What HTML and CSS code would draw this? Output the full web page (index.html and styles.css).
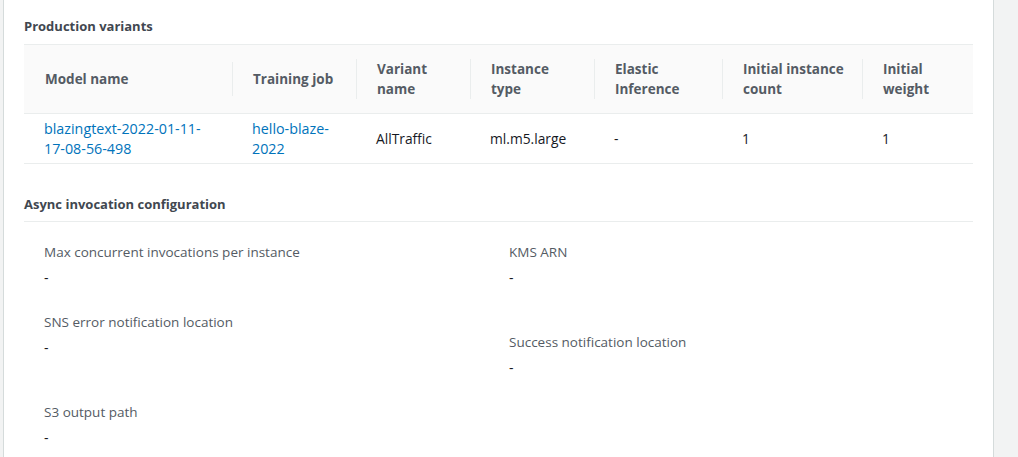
FILE: index.html
```html
<!DOCTYPE html>
<html>
<head>
<meta charset="utf-8">
<link rel="stylesheet" href="styles.css">
</head>
<body>
<div class="page">
  <div class="card">
    <h2 class="section-title">Production variants</h2>
    <table class="variants">
      <colgroup>
        <col style="width:208px"><col style="width:124px"><col style="width:114px"><col style="width:124px"><col style="width:128px"><col style="width:140px"><col style="width:111px">
      </colgroup>
      <thead>
        <tr>
          <th><span class="th-in">Model name</span></th>
          <th><span class="th-in div">Training job</span></th>
          <th><span class="th-in div">Variant<br>name</span></th>
          <th><span class="th-in div">Instance<br>type</span></th>
          <th><span class="th-in div">Elastic<br>Inference</span></th>
          <th><span class="th-in div">Initial instance<br>count</span></th>
          <th><span class="th-in div">Initial<br>weight</span></th>
        </tr>
      </thead>
      <tbody>
        <tr>
          <td><a href="#">blazingtext-2022-01-11-<br>17-08-56-498</a></td>
          <td><a href="#">hello-blaze-<br>2022</a></td>
          <td>AllTraffic</td>
          <td>ml.m5.large</td>
          <td>-</td>
          <td>1</td>
          <td>1</td>
        </tr>
      </tbody>
    </table>
    <h2 class="section-title async">Async invocation configuration</h2>
    <div class="fields">
      <div class="col">
        <div class="field"><div class="label">Max concurrent invocations per instance</div><div class="value">-</div></div>
        <div class="field"><div class="label">SNS error notification location</div><div class="value">-</div></div>
        <div class="field gap"><div class="label">S3 output path</div><div class="value">-</div></div>
      </div>
      <div class="col right">
        <div class="field"><div class="label">KMS ARN</div><div class="value">-</div></div>
        <div class="field gap"><div class="label">Success notification location</div><div class="value">-</div></div>
      </div>
    </div>
  </div>
  <div class="side"></div>
</div>
</body>
</html>
```
FILE: styles.css
```css
html, body { margin: 0; padding: 0; }
body {
  font-family: "Open Sans", "Noto Sans", sans-serif;
  font-size: 14px;
  color: #16191f;
  background: #f2f3f3;
}
.page {
  display: flex;
  height: 457px;
  overflow: hidden;
}
.card {
  width: 991px;
  flex: none;
  margin-left: 3px;
  border-left: 1px solid #d5dbdb;
  border-right: 1px solid #d5dbdb;
  background: #fff;
  padding: 0 20px;
  box-sizing: border-box;
}
.side { flex: 1; }
.section-title {
  margin: 0;
  font-size: 13px;
  font-weight: 700;
  color: #414750;
  line-height: 18px;
  padding: 17px 0 0 0;
  height: 27px;
}
.variants {
  border-collapse: collapse;
  table-layout: fixed;
  width: 949px;
}
.variants thead tr {
  background: #fafafa;
  border-top: 1px solid #eaeded;
  border-bottom: 1px solid #eaeded;
}
.variants th {
  text-align: left;
  padding: 0;
  height: 68px;
  font-size: 13.5px;
  font-weight: 700;
  color: #545b64;
  line-height: 20px;
  vertical-align: middle;
}
.th-in {
  display: flex;
  align-items: center;
  min-height: 34px;
  padding-left: 20px;
}
.variants th:first-child .th-in { padding-left: 21px; }
.th-in.div { border-left: 1px solid #eaeded; }
.variants td {
  padding: 0 0 0 20px;
  height: 49px;
  line-height: 20px;
  border-bottom: 1px solid #eaeded;
  vertical-align: middle;
  font-size: 13.8px;
}
.variants a { color: #0073bb; text-decoration: none; font-size: 14.3px; }
.section-title.async {
  padding-top: 31px;
  height: 26px;
  border-bottom: 1px solid #eaeded;
  width: 949px;
}
.fields {
  display: flex;
  width: 949px;
  padding-top: 20px;
}
.col { display: flex; flex-direction: column; gap: 24px; }
.col:first-child { width: 465px; padding-left: 20px; }
.field { display: flex; flex-direction: column; gap: 5px; }
.label { color: #545b64; line-height: 20px; font-size: 13.5px; }
.value { color: #16191f; line-height: 20px; padding-top: 1px; }
.field.gap { margin-top: 20px; }
```
